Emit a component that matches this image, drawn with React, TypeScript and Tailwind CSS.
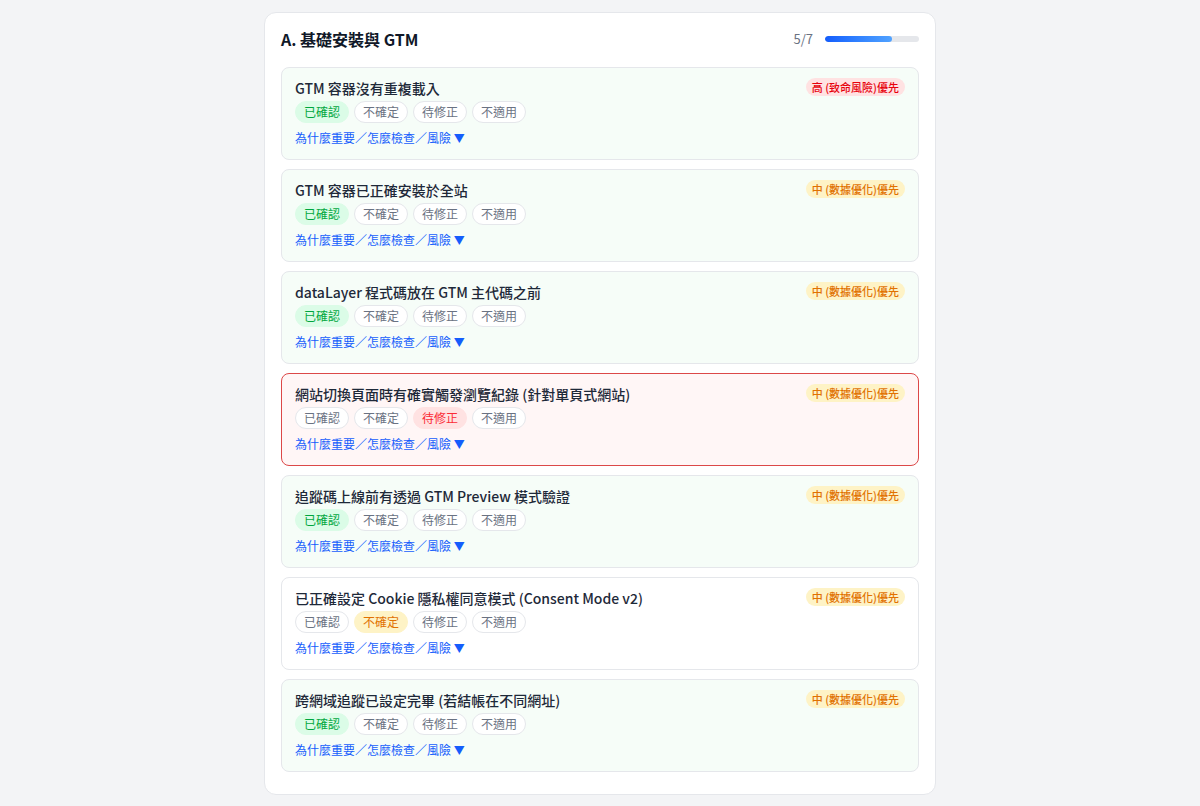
import React from 'react';

type Status = 'confirmed' | 'unsure' | 'fix' | 'na' | null;
type Priority = 'high' | 'mid';

interface Item {
  id: number;
  title: string;
  priority: Priority;
  status: Status;
}

const items: Item[] = [
  { id: 1, title: 'GTM 容器沒有重複載入', priority: 'high', status: 'confirmed' },
  { id: 2, title: 'GTM 容器已正確安裝於全站', priority: 'mid', status: 'confirmed' },
  { id: 3, title: 'dataLayer 程式碼放在 GTM 主代碼之前', priority: 'mid', status: 'confirmed' },
  { id: 4, title: '網站切換頁面時有確實觸發瀏覽紀錄 (針對單頁式網站)', priority: 'mid', status: 'fix' },
  { id: 5, title: '追蹤碼上線前有透過 GTM Preview 模式驗證', priority: 'mid', status: 'confirmed' },
  { id: 6, title: '已正確設定 Cookie 隱私權同意模式 (Consent Mode v2)', priority: 'mid', status: 'unsure' },
  { id: 7, title: '跨網域追蹤已設定完畢 (若結帳在不同網址)', priority: 'mid', status: 'confirmed' },
];

const options: { key: Status; label: string; active: string }[] = [
  { key: 'confirmed', label: '已確認', active: 'bg-green-100 border-green-100 text-green-600' },
  { key: 'unsure', label: '不確定', active: 'bg-amber-100 border-amber-100 text-amber-600' },
  { key: 'fix', label: '待修正', active: 'bg-red-100 border-red-100 text-red-500' },
  { key: 'na', label: '不適用', active: 'bg-gray-100 border-gray-100 text-gray-600' },
];

// card tint follows the chosen status
const itemTone = (status: Status) => {
  switch (status) {
    case 'confirmed':
      return 'bg-[#f6fdf8] border-gray-200';
    case 'fix':
      return 'bg-[#fff6f6] border-[#dc4848]';
    default:
      return 'bg-white border-gray-200';
  }
};

function PriorityBadge({ priority }: { priority: Priority }) {
  if (priority === 'high') {
    return (
      <span className="shrink-0 rounded-full bg-red-100 px-1.5 h-[18px] leading-[18px] text-[11px] font-medium text-red-600">
        高 (致命風險)優先
      </span>
    );
  }
  return (
    <span className="shrink-0 rounded-full bg-amber-100 px-1.5 h-[18px] leading-[18px] text-[11px] font-medium text-amber-600">
      中 (數據優化)優先
    </span>
  );
}

function ChecklistItem({ item }: { item: Item }) {
  return (
    <div className={`h-[93px] rounded-lg border px-[13px] pt-[10px] ${itemTone(item.status)}`}>
      <div className="flex items-start justify-between gap-3">
        <div className="text-sm leading-[21px] font-medium text-gray-800">{item.title}</div>
        <PriorityBadge priority={item.priority} />
      </div>
      <div className="mt-[2px] flex gap-[5px]">
        {options.map((o) => (
          <button
            key={o.label}
            className={`h-[22px] rounded-full border px-[8px] text-xs leading-[20px] ${
              item.status === o.key ? o.active : 'bg-white border-gray-200 text-gray-500'
            }`}
          >
            {o.label}
          </button>
        ))}
      </div>
      <div className="mt-[6px] text-xs leading-[18px] text-blue-600">
        為什麼重要／怎麼檢查／風險 <span className="text-[11px]">▼</span>
      </div>
    </div>
  );
}

export default function App() {
  const done = 5;
  const total = 7;
  return (
    <div
      className="min-h-[806px] bg-gray-100 flex justify-center pt-3 pb-3"
      style={{ fontFamily: '"Noto Sans CJK TC", "Noto Sans", sans-serif' }}
    >
      <div className="w-[672px] self-start rounded-xl border border-gray-200 bg-white px-4 pt-[14px] pb-[22px]">
        <div className="flex items-center justify-between mb-[16px]">
          <h2 className="text-base leading-6 font-bold text-gray-900">A. 基礎安裝與 GTM</h2>
          <div className="flex items-center gap-3">
            <span className="text-[13px] text-gray-500">
              {done}/{total}
            </span>
            <div className="w-[94px] h-[6px] rounded-full bg-gray-200 overflow-hidden">
              <div
                className="h-full rounded-full bg-gradient-to-r from-blue-600 to-blue-400"
                style={{ width: `${(done / total) * 100}%` }}
              />
            </div>
          </div>
        </div>
        <div className="flex flex-col gap-[9px]">
          {items.map((item) => (
            <ChecklistItem key={item.id} item={item} />
          ))}
        </div>
      </div>
    </div>
  );
}
